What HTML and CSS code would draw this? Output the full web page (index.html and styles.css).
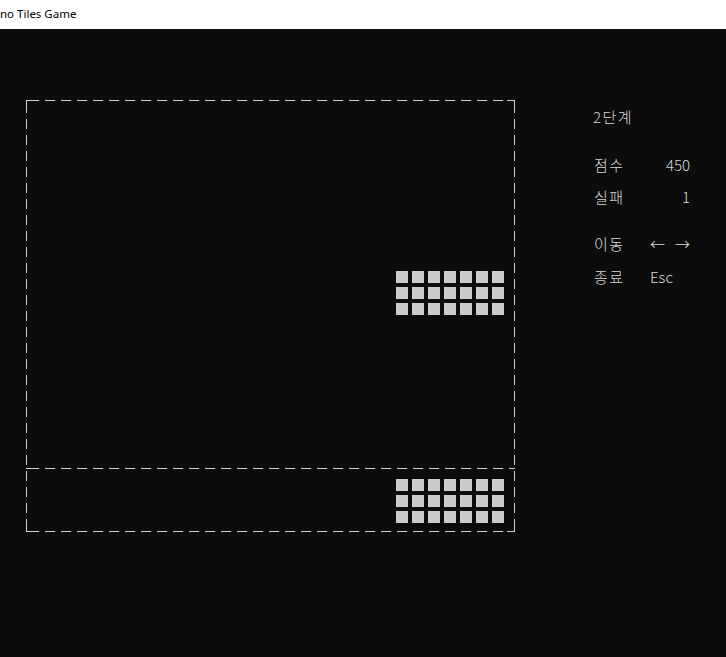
FILE: index.html
```html
<!DOCTYPE html>
<html lang="ko">
<head>
<meta charset="utf-8">
<title>Piano Tiles Game</title>
<link rel="stylesheet" href="styles.css">
</head>
<body>
<div class="titlebar"><span class="title">no Tiles Game</span></div>
<main class="console">
  <section class="board">
    <svg class="frame" width="489" height="432" viewBox="0 0 489 432">
      <g stroke="#d2d2d2" stroke-width="1" fill="none">
        <line x1="0" y1="0.5" x2="489" y2="0.5" stroke-dasharray="10 6" stroke-dashoffset="-3"/>
        <line x1="0" y1="368.5" x2="489" y2="368.5" stroke-dasharray="10 6" stroke-dashoffset="-3"/>
        <line x1="0" y1="431.5" x2="489" y2="431.5" stroke-dasharray="10 6" stroke-dashoffset="-3"/>
        <line x1="0.5" y1="0" x2="0.5" y2="432" stroke-dasharray="10 6" stroke-dashoffset="-3"/>
        <line x1="488.5" y1="0" x2="488.5" y2="432" stroke-dasharray="10 6" stroke-dashoffset="-3"/>
        <path d="M0 0.5H8M0.5 0V8M481 0.5H489M488.5 0V8M0 431.5H8M0.5 424V432M481 431.5H489M488.5 424V432M0 368.5H5M484 368.5H489"/>
      </g>
    </svg>
    <div class="lane lane-top">
      <div class="tiles">
        <i></i><i></i><i></i><i></i><i></i><i></i><i></i>
        <i></i><i></i><i></i><i></i><i></i><i></i><i></i>
        <i></i><i></i><i></i><i></i><i></i><i></i><i></i>
      </div>
    </div>
    <div class="lane lane-bottom">
      <div class="tiles">
        <i></i><i></i><i></i><i></i><i></i><i></i><i></i>
        <i></i><i></i><i></i><i></i><i></i><i></i><i></i>
        <i></i><i></i><i></i><i></i><i></i><i></i><i></i>
      </div>
    </div>
  </section>
  <aside class="info">
    <div class="level">2단계</div>
    <div class="stats">
      <span class="label">점수</span><span class="value num">450</span>
      <span class="label">실패</span><span class="value num">1</span>
    </div>
    <div class="stats keys">
      <span class="label">이동</span><span class="value arrows"><span>←</span><span>→</span></span>
      <span class="label">종료</span><span class="value">Esc</span>
    </div>
  </aside>
</main>
</body>
</html>
```

FILE: styles.css
```css
html, body {
  margin: 0;
  padding: 0;
}
body {
  width: 726px;
  height: 657px;
  overflow: hidden;
  background: #0c0c0c;
  font-family: "Noto Sans CJK KR", "Noto Sans", sans-serif;
}
.titlebar {
  height: 29px;
  background: #ffffff;
  display: flex;
  align-items: center;
}
.title {
  font-family: "Noto Sans", "Open Sans", sans-serif;
  font-size: 11.5px;
  color: #000;
  line-height: 16px;
  margin-top: -2px;
}
.console {
  display: flex;
  align-items: flex-start;
}
.board {
  position: relative;
  width: 489px;
  height: 432px;
  margin-left: 26px;
  margin-top: 71px;
  display: grid;
  grid-template-rows: 368px 64px;
}
.frame {
  position: absolute;
  left: 0;
  top: 0;
  display: block;
}
.lane {
  display: flex;
  justify-content: flex-start;
  padding-left: 370px;
}
.lane-top {
  padding-top: 171px;
}
.lane-bottom {
  padding-top: 11px;
}
.tiles {
  display: grid;
  grid-template-columns: repeat(7, 12px);
  grid-auto-rows: 12px;
  gap: 4px;
}
.tiles i {
  display: block;
  background: #cbcbcb;
}
.info {
  margin-left: 78px;
  margin-top: 80px;
  color: #dadada;
  font-size: 15px;
  font-weight: 300;
  line-height: 16px;
}
.level {
  height: 16px;
  letter-spacing: 1.5px;
}
.stats {
  display: grid;
  grid-template-columns: 57px 40px;
  grid-auto-rows: 16px;
  row-gap: 16px;
  margin-top: 32px;
}
.label {
  letter-spacing: 1.5px;
  padding-left: 1px;
}
.keys {
  margin-top: 31px;
  row-gap: 17px;
}
.num {
  text-align: right;
}
.arrows {
  display: flex;
  justify-content: space-between;
}
```
